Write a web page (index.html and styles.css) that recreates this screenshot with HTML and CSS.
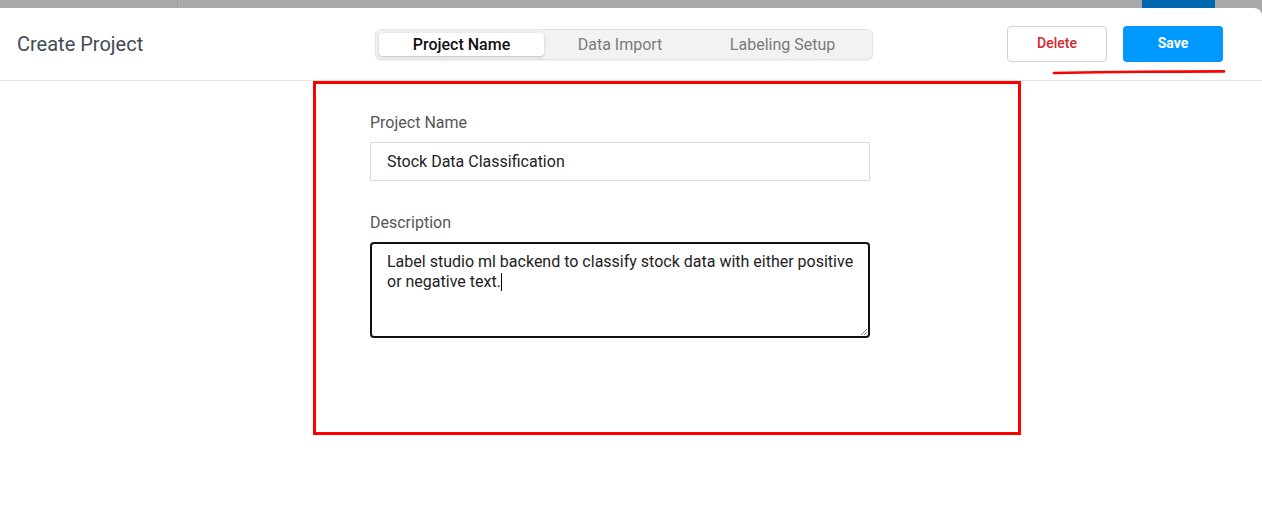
FILE: index.html
```html
<!DOCTYPE html>
<html>
<head>
<meta charset="utf-8">
<link rel="stylesheet" href="styles.css">
</head>
<body>
<div class="backdrop">
  <div class="backdrop-divider"></div>
  <div class="backdrop-btn"></div>
</div>
<div class="modal">
  <header class="header">
    <h1 class="title">Create Project</h1>
    <nav class="tabs">
      <span class="tab tab-active">Project Name</span>
      <span class="tab">Data Import</span>
      <span class="tab">Labeling Setup</span>
    </nav>
    <div class="actions">
      <button class="btn btn-delete">Delete</button>
      <button class="btn btn-save">Save</button>
    </div>
  </header>
  <main class="content">
    <form class="form">
      <label class="field-label">Project Name</label>
      <div class="input">Stock Data Classification</div>
      <label class="field-label field-label-gap">Description</label>
      <div class="textarea">Label studio ml backend to classify stock data with either positive or negative text.<span class="caret"></span>
        <svg class="grip" width="8" height="8" viewBox="0 0 8 8"><path d="M7 1 L1 7 M7 4 L4 7" stroke="#888" stroke-width="1"/></svg>
      </div>
    </form>
  </main>
</div>
<div class="annot-box"></div>
<svg class="annot-line" width="180" height="8" viewBox="0 0 180 8"><path d="M2 5 L45 4.3 L90 3.8 L130 3.6 L172 3.4" stroke="#ff0000" stroke-width="2.6" fill="none" stroke-linecap="round"/></svg>
</body>
</html>
```

FILE: styles.css
```css
* { box-sizing: border-box; }
html, body { margin: 0; padding: 0; }
body {
  width: 1262px;
  height: 516px;
  overflow: hidden;
  font-family: Roboto, "Liberation Sans", sans-serif;
  background: #a9a9a9;
  position: relative;
}
.backdrop {
  height: 8px;
  display: flex;
  background: #a9a9a9;
}
.backdrop-divider {
  width: 1px;
  height: 8px;
  margin-left: 177px;
  background: #9a9a9a;
}
.backdrop-btn {
  width: 73px;
  height: 8px;
  margin-left: 964px;
  background: #0068ae;
}
.modal {
  background: #fff;
  height: 508px;
  border-top-right-radius: 8px;
}
.header {
  height: 73px;
  display: flex;
  align-items: center;
  padding: 0 39px 0 17px;
  border-bottom: 1px solid #e4e4e4;
}
.title {
  margin: 0;
  width: 358px;
  font-size: 20px;
  font-weight: 400;
  color: #404b56;
}
.tabs {
  width: 498px;
  height: 31px;
  display: flex;
  align-items: center;
  padding: 0 3px;
  background: #f2f2f2;
  border: 1px solid #e3e3e3;
  border-radius: 6px;
  box-shadow: 0 1px 2px rgba(0,0,0,0.06);
}
.tab {
  flex: 1 1 auto;
  padding: 0 30px;
  height: 23px;
  line-height: 23px;
  text-align: center;
  font-size: 16px;
  color: #7a7a7a;
  white-space: nowrap;
}
.tab-active {
  background: #fff;
  color: #111;
  font-weight: 500;
  border-radius: 4px;
  box-shadow: 0 1px 3px rgba(0,0,0,0.22);
}
.actions {
  margin-left: auto;
  display: flex;
  gap: 16px;
  margin-top: -1px;
}
.btn {
  width: 100px;
  height: 36px;
  border-radius: 4px;
  font-family: Roboto, "Liberation Sans", sans-serif;
  font-size: 14px;
  font-weight: 500;
  padding: 0 0 2px;
}
.btn-delete {
  background: #fff;
  border: 1px solid #d2d2d2;
  color: #d42532;
}
.btn-save {
  background: #0099ff;
  border: none;
  color: #fff;
  font-weight: 700;
}
.content {
  padding: 32px 0 0 370px;
}
.form {
  width: 500px;
  display: flex;
  flex-direction: column;
}
.field-label {
  font-size: 16px;
  color: #555;
  line-height: 20px;
  margin-bottom: 9px;
}
.field-label-gap {
  margin-top: 32px;
  margin-bottom: 9px;
}
.input {
  height: 39px;
  border: 1px solid #dcdcdc;
  padding: 0 16px;
  line-height: 37px;
  font-size: 16px;
  color: #222;
}
.textarea {
  position: relative;
  height: 96px;
  border: 2px solid #111;
  border-radius: 4px;
  padding: 8px 8px 8px 15px;
  font-size: 16px;
  line-height: 20px;
  color: #222;
}
.caret {
  display: inline-block;
  width: 1px;
  height: 18px;
  background: #000;
  vertical-align: -4px;
}
.grip {
  position: absolute;
  right: 0;
  bottom: 0;
}
.annot-box {
  position: absolute;
  left: 313px;
  top: 81px;
  width: 708px;
  height: 354px;
  border: 3px solid #ff0000;
}
.annot-line {
  position: absolute;
  left: 1052px;
  top: 68px;
}
```
